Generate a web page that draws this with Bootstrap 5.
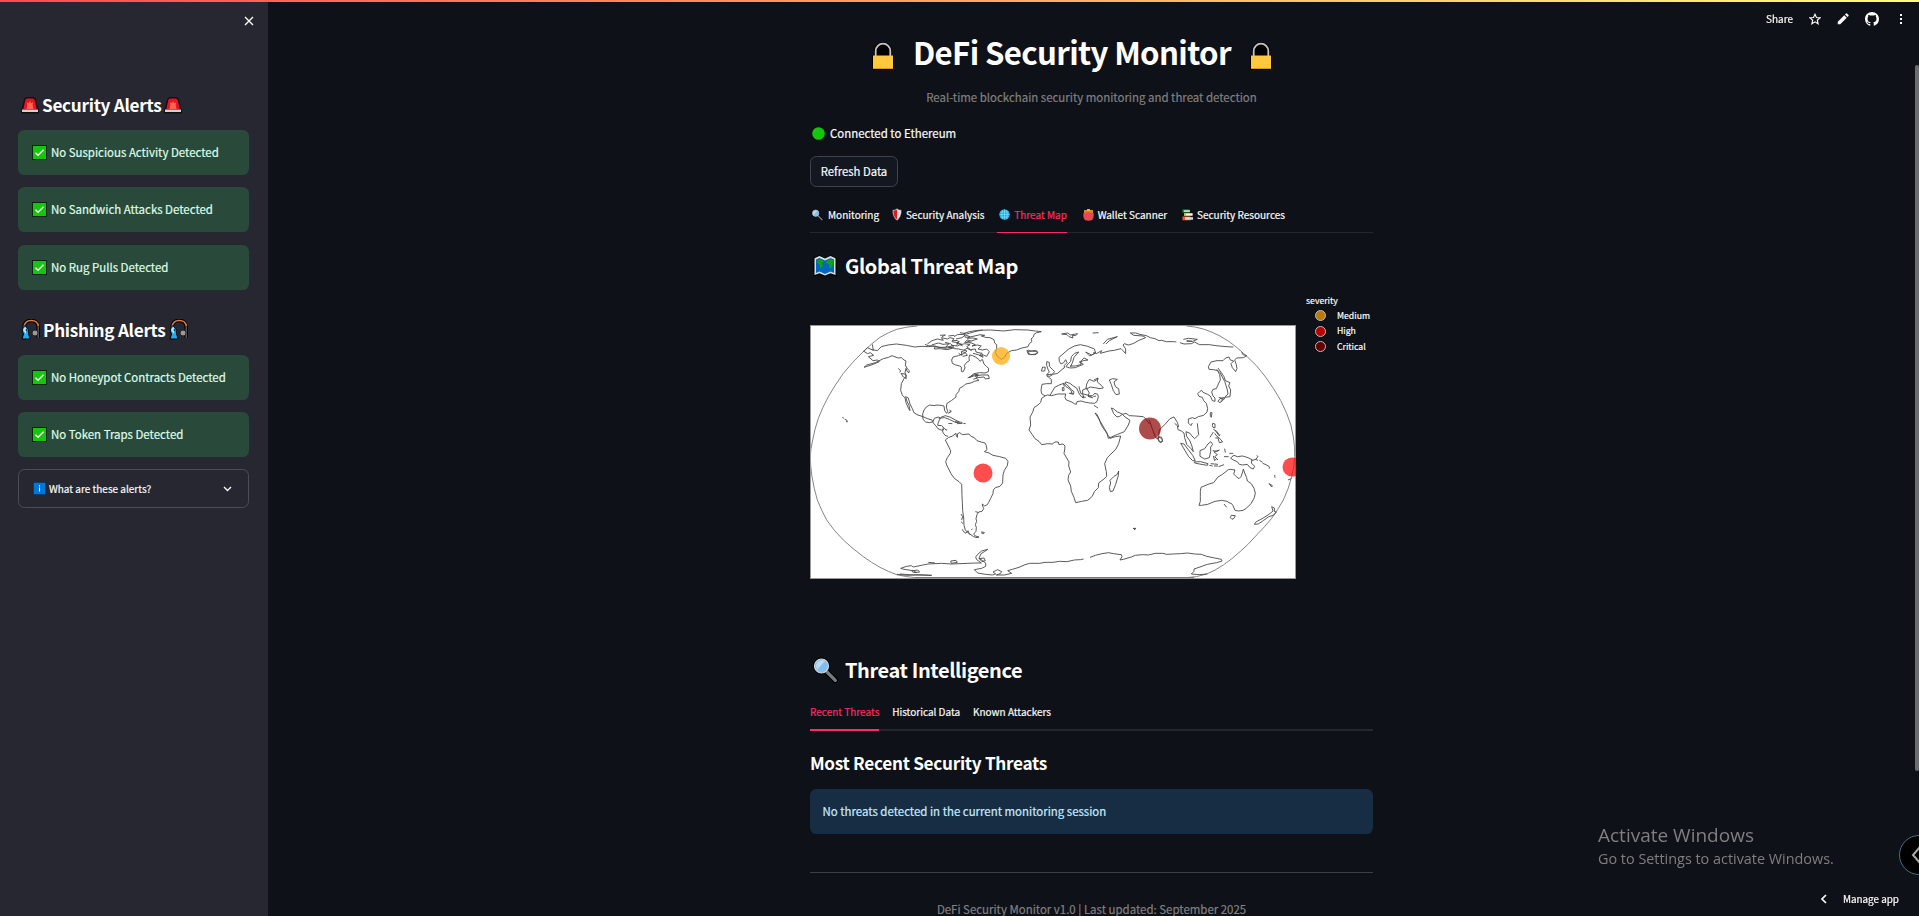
<!DOCTYPE html>
<html lang="en" data-bs-theme="dark">
<head>
<meta charset="utf-8">
<meta name="viewport" content="width=device-width, initial-scale=1">
<title>DeFi Security Monitor</title>
<link href="https://cdn.jsdelivr.net/npm/bootstrap@5.3.0/dist/css/bootstrap.min.css" rel="stylesheet">
<style>
:root{--ink:#fafafa;--accent:#ff2b5e}
body{font-family:"Noto Sans CJK SC","Source Sans Pro",sans-serif;background:#0e1117;color:var(--ink);font-size:11.45px;line-height:20px;height:100vh;overflow:hidden;white-space:nowrap;-webkit-text-stroke:.2px}
.topline{height:2px;background:linear-gradient(90deg,#ff4b4b,#fffd80);z-index:9}
.side{width:268px;background:#262730;padding:0 19px 0 18px}
.side-close{height:130px}
h1,h2,h3,p{margin:0}
h1,h2,h3{-webkit-text-stroke:0}
h1{font-size:31.2px;font-weight:700;line-height:40px;letter-spacing:-.65px}
h2{font-size:20px;font-weight:700;line-height:28px;letter-spacing:-.4px}
h3{font-size:17.2px;font-weight:700;line-height:26px;letter-spacing:-.3px}
.note{height:45px;border-radius:6.4px;border:0;margin:0}
.note-ok{background:#294a3b;color:#dffde9;padding:0 14px;margin-bottom:12.33px}
.note-info{background:#172d43;color:#c7ebff;padding:0 12.5px 1px}
.note-ok span{margin-top:-1px}
.expander{height:39px;border:1px solid #4b4c55;border-radius:6.4px;padding:0 16px 0 14px;font-size:10px}
.column{width:563px}
.column>*{flex-shrink:0}
.dim{color:#808080}
.btn-refresh{width:88px;height:31px;background:#131720;border:1px solid #40434b;border-radius:6.4px;color:var(--ink);font-size:11.3px;line-height:27px;padding:0 0 1px}
.tabbar{border-bottom:1px solid #24272d;gap:12.8px;font-size:10px;height:34px}
.tabbar .nav-link{padding:0 0 2px;color:var(--ink);line-height:31px;height:34px;display:flex;align-items:center;border-bottom:1px solid transparent}
.tabbar .nav-link.active{color:var(--accent);border-bottom-color:var(--accent)}
.thick{border-bottom-width:2px;height:35px}
.thick .nav-link{border-bottom-width:2px;height:35px}
.legend-box{font-size:8.7px;line-height:15.200px;padding:0 0 0 10px;margin-top:-1px}
.dot{width:11px;height:11px;border-radius:50%;border:1.5px solid #bbb}
.rule{height:1px;background:#3b3e43}
.scroll{width:4px;padding-top:65px}
.scroll div{height:706px;background:#6b6c70;border-radius:2px}
.tools{top:10px;right:12px;height:18px;font-size:10px}
.watermark{left:1598px;top:820px;color:#7d7f82;font-family:"Open Sans","Noto Sans",sans-serif;-webkit-text-stroke:0}
.bubble{width:40px;height:40px;left:1899px;top:835px;border-radius:50%;background:#000;border:1px solid #3f7286}
.manage{right:20px;top:889px;font-size:9.9px}
</style>
</head>
<body>
<svg width="0" height="0" class="position-absolute">
<defs>
<symbol id="lock" viewBox="0 0 24 30"><path d="M3 14V10a9 9 0 0 1 18 0v4h2v15H1V14z" fill="#000"/><path d="M4.700 15V10a7.300 7.300 0 0 1 14.600 0v5" fill="#000" stroke="#c4c4c4" stroke-width="1.800"/><path d="M2 14.500h20V27.500q0 .5-.5.5h-19q-.5 0-.5-.5z" fill="#ffc83d"/><path d="M2 27.500h20" stroke="#d99a1c"/></symbol>
<symbol id="siren" viewBox="0 0 18 17"><path d="M1 12 3.500 2.500Q4 .5 6 .5h6q2 0 2.500 2L17 12q1 .6 1 4H0q0-3.400 1-4z" fill="#111" stroke="#111"/><path d="M2.300 12 4.300 3.200Q4.600 1.500 6.300 1.500h5.400q1.700 0 2 1.700L15.700 12z" fill="#e81224"/><path d="M9 4l1.100 2 2.200-.4-.7 2.200.9 4.200h-7l.9-4.200-.7-2.200 2.200.4z" fill="#f4694a"/><path d="M1 12.500h16v2.500H1z" fill="#d2d2d2"/></symbol>
<symbol id="pole" viewBox="0 0 19 21"><path d="M3 8Q4 1.500 10 1.500q7 0 7.300 7V19" fill="none" stroke="#000" stroke-width="3.600"/><path d="M3 8Q4 1.500 10 1.500q7 0 7.300 6" fill="none" stroke="#e5793e" stroke-width="1.500"/><path d="M17.300 8v11" stroke="#555" stroke-width="1.600"/><circle cx="14" cy="14" r="3" fill="#999" stroke="#222"/><path d="M4 6.500q4.500 3.500 3.500 8L9 20H1l1.500-5Q-.5 10 4 6.500z" fill="#27a9ea" stroke="#000"/><path d="M2 11q1-3 3-3v7z" fill="#b8ecff"/><circle cx="5.300" cy="11" r=".8" fill="#000"/></symbol>
<symbol id="check" viewBox="0 0 15 15"><path d="M0 0h15v15H0z" fill="#0b2512"/><path d="M1 1h13v13H1z" fill="#16c60c"/><path d="M3.500 7.800 6 10.300 11.500 4.700" fill="none" stroke="#fff" stroke-width="1.400"/></symbol>
<symbol id="info" viewBox="0 0 13 13"><path d="M0 0h13v13H0z" fill="#10233c"/><path d="M.7.7h11.600v11.600H.7z" fill="#0078d7"/><path d="M6.500 5.500V9.500M6.500 3.300v1.100" stroke="#fff" stroke-width="1.100"/></symbol>
<symbol id="lens" viewBox="0 0 25 26"><path d="M14 15l8.500 8.500" stroke="#000" stroke-width="5.500" stroke-linecap="round"/><circle cx="8.500" cy="9" r="8.500" fill="#000"/><path d="M14 15l8.300 8.300" stroke="#777d82" stroke-width="3.200" stroke-linecap="round"/><circle cx="8.500" cy="9" r="7" fill="#83beec" stroke="#cfd8de" stroke-width="1.200"/><path d="M3 9a6 6 0 0 1 9-5L4 13z" fill="#b9dcf6"/></symbol>
<symbol id="shield" viewBox="0 0 10 13"><path d="M5 .5Q7 2 9.500 2 9.800 9 5 12.500.2 9 .5 2 3 2 5 .5z" fill="#e6e6e6" stroke="#333" stroke-width=".5"/><path d="M5 1.500V11.500Q1.200 8.500 1.300 2.800 3.500 2.600 5 1.500z" fill="#e81224"/></symbol>
<symbol id="globe" viewBox="0 0 11 11"><circle cx="5.500" cy="5.500" r="5.200" fill="#19aee8"/><path d="M.5 5.500h10M5.500.5v10M1.500 3h8M1.500 8h8M3.500 1Q1.800 5.500 3.500 10M7.500 1q1.700 4.500 0 9" fill="none" stroke="#8fe2ff" stroke-width=".6"/></symbol>
<symbol id="purse" viewBox="0 0 11 12"><path d="M1 1h9v4H1z" fill="#d98a16"/><path d="M4 0h3v2H4z" fill="#f0b030"/><path d="M.5 4q5-1.500 10 0 .8 4.500-1.300 7-3.700 1.500-7.400 0Q-.3 8.500.5 4z" fill="#e74856"/></symbol>
<symbol id="books" viewBox="0 0 11 12"><path d="M.5.500h7v3h-7z" fill="#16a329"/><path d="M2 1.300h6v1.500H2z" fill="#dfe9df"/><path d="M2 4h8.500v3H2z" fill="#f0a52a"/><path d="M4 4.700h6.500v1.500H4z" fill="#fff"/><path d="M.5 7.500h8v3.800h-8z" fill="#e5602b"/><path d="M3 8.200h8v2.500H3z" fill="#d9dde2"/></symbol>
<symbol id="wmap" viewBox="0 0 26 24"><path d="M1 4 7 1l6 3 6-3 6 3-.5 19-6-2-5.500 2-6-2-6 2z" fill="#050607"/><path d="M2.500 4.300 7.500 2l5.500 2.500L18.500 2l5 2.300V21l-5-1.800L13 21.500l-5.500-2.300-5 1.800z" fill="#d8dde2"/><path d="M4 5.500 7.500 4l5.500 2.500L18.500 4 22 5.500V19l-3.500-1.400L13 20l-5.500-2.400L4 19z" fill="#0067c0"/><path d="M5 6.500l4-1 3 2-2 2 1 2-2.500 3-1-4-2.500-2zM14 7.500l4-2.500 3.500 1.500-.5 4-2 4-2-1 .5-3-3-1z" fill="#13a10e"/></symbol>
</defs></svg>

<div class="topline fixed-top"></div>
<div class="d-flex h-100">
  <aside class="side flex-shrink-0">
    <div class="side-close position-relative d-flex flex-column justify-content-between">
      <svg class="position-absolute" style="left:226px;top:16px" width="10" height="10"><path d="M1 1l8 8M9 1 1 9" stroke="#fafafa" stroke-width="1.400"/></svg>
      <span></span>
      <h3 class="d-flex align-items-center mb-2 pb-1" style="padding-left:3px"><svg width="18" height="17"><use href="#siren"/></svg><span style="margin:0 3px">Security Alerts</span><svg width="18" height="17"><use href="#siren"/></svg></h3>
    </div>
    <div class="note note-ok alert d-flex align-items-center"><svg width="15" height="15"><use href="#check"/></svg><span class="ms-1">No Suspicious Activity Detected</span></div>
    <div class="note note-ok alert d-flex align-items-center"><svg width="15" height="15"><use href="#check"/></svg><span class="ms-1">No Sandwich Attacks Detected</span></div>
    <div class="note note-ok alert d-flex align-items-center"><svg width="15" height="15"><use href="#check"/></svg><span class="ms-1">No Rug Pulls Detected</span></div>
    <h3 class="d-flex align-items-center" style="padding-left:3px;margin:27px 0 12px"><svg width="19" height="21"><use href="#pole"/></svg><span style="margin:0 3px">Phishing Alerts</span><svg width="19" height="21"><use href="#pole"/></svg></h3>
    <div class="note note-ok alert d-flex align-items-center"><svg width="15" height="15"><use href="#check"/></svg><span class="ms-1">No Honeypot Contracts Detected</span></div>
    <div class="note note-ok alert d-flex align-items-center"><svg width="15" height="15"><use href="#check"/></svg><span class="ms-1">No Token Traps Detected</span></div>
    <div class="expander d-flex align-items-center"><svg width="13" height="13"><use href="#info"/></svg><span class="me-auto" style="margin-left:3px">What are these alerts?</span><svg width="9" height="6"><path d="M1 1l3.500 3.500L8 1" fill="none" stroke="#fafafa" stroke-width="1.400"/></svg></div>
  </aside>

  <main class="flex-grow-1 d-flex justify-content-center">
    <div class="column d-flex flex-column flex-shrink-0">
      <h1 class="d-flex align-items-center" style="margin:32px 0 0 61px"><svg width="24" height="30" style="margin-top:8px"><use href="#lock"/></svg><span style="margin:0 18px">DeFi Security Monitor</span><svg width="24" height="30" style="margin-top:8px"><use href="#lock"/></svg></h1>
      <p class="dim text-center" style="margin-top:15px">Real-time blockchain security monitoring and threat detection</p>
      <p class="d-flex align-items-center" style="margin-top:16px;padding-left:2px"><svg width="13" height="13"><circle cx="6.500" cy="6.500" r="6.300" fill="#16c60c"/></svg><span style="margin-left:5px">Connected to Ethereum</span></p>
      <button type="button" class="btn btn-refresh" style="margin-top:13px">Refresh Data</button>
      <nav class="nav flex-nowrap tabbar" style="margin-top:12px">
        <a class="nav-link"><svg width="13" height="12" style="margin:0 4px 0 1px"><use href="#lens"/></svg>Monitoring</a>
        <a class="nav-link"><svg width="10" height="13" class="me-1"><use href="#shield"/></svg>Security Analysis</a>
        <a class="nav-link active"><svg width="11" height="11" style="margin:0 4px 0 2px"><use href="#globe"/></svg>Threat Map</a>
        <a class="nav-link"><svg width="11" height="12" style="margin:0 4px 0 3px"><use href="#purse"/></svg>Wallet Scanner</a>
        <a class="nav-link"><svg width="11" height="12" style="margin:0 4px 0 2px"><use href="#books"/></svg>Security Resources</a>
      </nav>
      <h2 class="d-flex align-items-center" style="margin-top:19px;padding-left:2px"><svg width="26" height="24"><use href="#wmap"/></svg><span style="margin-left:7px">Global Threat Map</span></h2>
      <div class="d-flex" style="margin-top:14px">
        <svg class="flex-shrink-0" style="margin-top:31px" width="486" height="254" viewBox="0 0 486 254">
          <rect width="486" height="254" fill="#fff"/>
          <g fill="none" stroke="#484848" stroke-width="2.700" stroke-linejoin="round">
          <!-- Americas, Greenland, west Antarctica -->
          <g transform="translate(-10 -85) scale(.33333)">
            <path stroke="#777" d="M352 258Q320 260 290 268 265 277 240 292 213 312 190 335 157 366 130 400 105 435 85 470 67 503 55 535 44 567 38 600 31 630 31 650 31 680 36 710 42 747 52 780 64 811 80 840 102 873 130 900 159 927 190 950 215 968 240 982 265 995 290 1004 315 1010 345 1013"/>
            <path d="M190 335l12-12 18 8-3-18M190 333l13 8 8-3 10 8-16 4 14 12 14-2 5 5-18 8-28 9 8-7 26-7 24-12 16-4 10-5 18 7 10-1 8 7 6 3-2 12 5 10 7 7-1 6-5-3-4-10-3 13 4 10-7 8-8 15-2 20 5 15 8 7 3 15 8 18 4 6-3-16-6-12-4-14 8 4 5 18 7 14 5 12 9 6 18 6 13 6 14 4 4 9 8 9 6 8 12 5 8-6 4 6 4-3M217 329l15 3 12-12 20-5 25-3 30 4 25 5 22-2 20 1 18-2 10 3 22 4 16-3 12 4 12 1 9 2 16 4-8 7-18 7-16 4-4 9 2 10 10 5 12 3 5 3 0 13 5 2 6-12-2-8 7-9 8-5-1-10 2-7 9 2 10 5 8 6 4 6 7-6 5 14 8 8 6 5-1 10-10 4-16-1-17 3-15 12 14-5 12-2-4 9 8 6-14 3-10 5-16 3-6 6-12 7-3 10-8 9 0 7-14 11-13 8-2 11 4 14-3 5-6-8-2-14-9-2-12-1-9 2-13-2-10 6-7 9-4 12 1 16 8 8 12 2 10-3 4-10 12-4 6 3-6 13-2 9 12 1 5 4-2 15 7 10 9 3"/>
            <path d="M295 385l7 8-3 4M303 400l14 3 2 13-9-5zM503 414l20-10 12-1-10 6 18-4 22 0 3 10-12 2-4-6-20 2-12 5M448 510l6 4-6 3M444 520l8-4M422 532l14-5 16 5 14 8 12 6-10 2-20-10-14-5-18 2M445 550l12 1M465 545l20 2 2 3-16 1M490 550l7 1M127 532l5 3M134 538l6 2 2 6-4-2"/>
            <path d="M436 600l10-8 10-3 12-9 1 8 3 4 1-11 6-3 8 6 20-2 6 7 10 4 8 9 12 4 12 3 4 8 2 12-8 6 14 4 12 7 20 4 18 5 7 9-2 13-9 14-4 14-1 24-8 10-14 4-6 7-1 11-7 14-6 12-4 7-8 4-7-6 1 6 3 8-5 8-10 2-5 8-3 12 2 8-4 10 3 8-1 12-7 8 5 6 11 3-6 2-10-3-16-11-9-9-4-14-1-22-3-22-1-25-1-20-1-34-8-8-14-10-10-14-13-26-3-10 5-12 9-13 1-8-4-8zM543 876l10 1-2 4-7-2"/>
            <path d="M487 868l3 6 8 6 6-8 5 12M483 822l5 8-3 10M484 845l4 6M514 870l4-4M526 815l8 2"/>
            <path d="M496 292l-4-12 16-5 24-4 40-1 38 3 34-4 38 1 24 3 18 2-14 3-8 5-2 8-7 6 3 7-8 7-4 9-18 4-16 6-16 2-14 8-6 12-10 6-12-9-6-11 4-12 0-12-6-5-2-10-12-6-14-1-12-4 10-2-14-2-12 3-18 4zM680 333l6-3 3 5 8-3 12 0 5 5-6 5-14 2-10-2 2-4z"/>
            <path d="M382 312l14-10 16-5 18 4-6-8 18 4 8-4 12 3-6 7 12-2 10 4-8 5 14 2-12 6-16-2 6 6-16-2-14 2-18 0-16-4-14-1-9-4M395 315l20-6 14 4 22-2 6 5-12 7 12 2-16 4-20-3-18 1 2-6M420 286l16-1-10 5M445 288l18-2M462 290l10-6 20-1M468 297l18-4 10-8 14 5-8 5 18-1 12 3-18 6-12-3-8 7 20 2 12 5-10 4 16-3 12 3-10 9 14 3 12-3 8 8-8 14-10-4-12 2 6-7-16-4-2-9-14 2-12-9 10-6-16-3-14 4M480 278l20 4 28-8 20-4M478 312l10 6M500 303l14 4M476 340l10 6-2-12 12 4 6 8-14 3M545 338l4 14-14-8-16-4M515 332l-14-7-10 6M437 322l10-12-12-3M455 305l20 3-5 8"/>
            <path d="M290 1003l30 3 35-2 40 2-55-1-40-3M350 998l-10-6-28-4-10-3 18-6 14-2 6 4 24-5 20-4 40-2 30 2 50-2 22-1 18 0-8-6-6-4-3-8 6-8 12-10 18-5-10 7-10 6-6 14 10 6 10 8 0 10-12 6-22 4 10 10 24 4 20 2 10-3-8-6 14-7 12 6-4 6-12 4 24 0 22-5-12-8 14-4 20-6 18-8 14-4 30 0 16-3 24 0 20-3 22 1 22-5 18-1 10-2M452 963l16-2 4 6-18 3zM385 967l20 2M538 956l14-2 4 8-10 3zM335 993l18-3 6 6-18 2z"/>
          </g>
          <!-- Europe, Africa, Middle East -->
          <g transform="translate(210 -5) scale(.33333)">
            <path d="M75 228l8-3 12 2 18-5 24 0-2 10 4 8 14 5 10 6 6 2 2-8 12-2 10 3 16 3 14 1 8-5 4-14-2-8-8-3-8 7-8 0-14-4-12-2-4-12-2-10M75 228l-10 7-3 12-8 8-12 8-4 14-8 14 1 12 1 12-5 15 10 14 8 12 12 8 8 10 18-3 14 1 8-6 10 0 2 8 12-2 6 6-1 12-2 10 8 14 7 12-1 12 6 18-6 10-2 14 8 18 2 16 8 18 5 16 18-4 18-3 14-12 6-14 12-12 1-14 16-12 8-8-1-14-5-24 8-18 14-14 12-12 8-16 6-23-16 2-16 5-5-8-8-12-12-18-8-20-12-18 6 4 10 22 12 20 8 14 4 16 28-12 20-8 12-20 5-14-15-10-8-8-8 6-8 2-10-10-7-17 6 2 12 10 8 3 8 4 10-3 10 7 18 1 24 2 10 10 8 12M388 300l8 24 10 26 4 6 6-4 2-22 18-18 14-16 12-5 10 16 4 14M415 350l10 2 3 12-6 4-6-8zM296 453l-1 14-8 26-8 20-8 2-3-12 4-14-2-8 12-12 10-6zM340 625l6 1-2 3z"/>
            <path d="M75 228l-10-7-2-10 3-18 14-2 14 0 0-13-8-6-6-5 9 2 10-6 14-3 16-14 4-2 0-8 8-8-4-9-6 9-8 4-5-8-1-12 12-10 16-14 18-10 18-4 22 5 20 8 4 12-12 6-12-6-6-3 8 8 4 4 14-7-2-4 8 4 16-9-4 8 26-7 16-2 20-5 6 6 8 9 0-14-8-12 4-4 12 4 14-4 18-10 20-8-8-5-28-2-10-7 16 0 12 4 20 4 12 6 14 3 12 6 8-1 14 4 24 0 6 1M152 140l6-14 4-14 14-16-12 4-10 10-2 14-8 8-6 8 12 4 16-1 14-6 10-4-12-7 12-4 14-2-12-6-8 8-2 12-16 4-16 0zM80 125l8 2 0 12 10 10 6 6-8 8-16 1 8-8-4-8-4-12zM64 153l4-12 8 1-2 11zM22 98l6-6 10 2 12 0 2 6-8 4-14-1z"/>
            <path d="M90 226l6-10 8-14 16-8 12-4 6 10 10 6 8 10-4 5 8 2 2-8-8-6-12-14-8-6 4-3 12 4 10 8 10 6 8 18 8 10 6 2-4-12 0-12 12-5 8 14-4 8 14 6-14-4M130 190l3 10M127 203l5 0 0 9-5 0zM147 220l12 0M187 230l10 2M220 230l8-2M198 206l2-14 8-14 14 6 8-4 4-6-2 12 12 10 6 8-10 2-16-3-12-2-14 6zM222 180l12-6M268 180l10-4 14 2-10 8 4 14 10 6 2 16-10 2-8-12-6-18zM250 72l12-14 30-8-24 12-10 10M125 42l18-3 8 6 22-4-6 6-10-1 2 8-12-4-6-6zM218 39l18-1M222 256l12 8"/>
          </g>
          <!-- Asia, Oceania, east Antarctica -->
          <g transform="translate(280 -45) scale(.33333)">
            <path stroke="#777" d="M290 138Q317 140 340 147 367 156 390 168 417 183 440 202 472 229 500 258 529 291 550 325 574 360 590 400 605 435 610 470 615 500 614 530 613 560 605 590 596 627 580 660 563 690 545 715 524 741 500 765 476 793 450 815 425 838 400 855 375 872 350 882 320 892 290 893"/>
            <path d="M270 188l12 4 22-1 10-5 14 8 30 0 20 3 30 3 22 1M280 178l16-3 26 3-14 6-18-2M290 184l16 0M455 217l4 7 11 3-10 6-20 1-6 6 5 14 2 12-4 9-10-12-4-12 8-8-10-3-4-9-10 3-8 8-18 0-18 4-8 14 2 8 14 1 12 3 6 12 2 16-6 12-6 14-10 2-4 8 4 12 6 6 0 10-8-2-6-14-8-5-14-6-4-6-6 4-6 6 4 8 10 3 4 10 8 8 4 16-2 10-10 10-16 4-10 6-8-3-12 4 0 12 8 8 4-8M322 430l2 18 2 16-12 12-8-8-6-8-12-5 2 14 10 14 6 16 4 16-8-10-12-12-6-20-2-14-8-6-10-4-2-12-8-7"/>
            <path d="M384 264l10 14 8 12 4 12 14 6-4 10 6 12-2 20-14 2-6 8-10 8-6-4 6-8 14-4 10-10-2-12-4-14-4-12-14-26-10-10M386 352l14 4-8 6M361 398l5 0-2 14-3-4zM368 430l7 2 0 12-6-2-2-6zM370 448l10 6 8 10M374 460l4 6 12 10 8 10-10 2-4-14-8 0M360 472l10-16M376 452l12 16 2-4M272 490l10 2 12 16 14 18 8 16-8 0-12-12-12-20zM312 546l20-1 22 6-2 5-24-4-14-3zM358 556l10 2M372 558l12 0M386 560l16-6M362 551l22 2M330 512l14-6 10-14 8-7 6 8-6 8 0 14-4 18-14 4-14-8zM368 512l14 2 6-4-16 6 10 8-8 6 10 10-4-4-6 6-4-14M404 506l2 12M402 530l14 0M418 520l12 0M426 530l6-4 10 4 16-2 16 5 12 6-2 10 10 10-4 8-10-4-8-10-14 2-10-2-6-8-10-4-10-6zM484 542l14-4 6-9-4-2M496 538l8 3M508 541l10 6M518 550l10 4M528 554l10 6 0 6M554 585l1 8M537 611l10 6-2 4zM594 600l10-4"/>
            <path d="M333 622l24-10 14-4 12-16 14-9 8-6 10-8 6-1 14 2-4 12 8 8 8 6 6-6 5-14 2-9 4 12 6 14 2 10 12 8 8 14 4 14-3 14-10 18-14 14-10 6-14 2-10-2-6-14-4-6-8-3-6-4-16-3-20 3-22 9-18 3-8 0 4-12 0-14 0-16zM424 706l12 1-4 8-6 3-5-5zM545 680l8 4 0 10 6 2-8 9-16 6-14 10-16 11-12 1 6-8 16-8 22-14 12-10zM402 672l8 10M202 474l8-2 8 8-4 6-6 0zM131 745l6 0-3 4z"/>
            <path d="M0 832l16-6 20-5 20-3 14 3 24 3 2 6-6 10 10-2 24-7 12-5 22-2 18 1 20-5 22 0 12 3 20-1 22-1 20-2 22 3 20 1 16 6 24 5 20 4 2 5-16 5-28 5-22 8-18 6 0 7-8 8 24 2 24-2"/>
          </g>
          </g>
          <path d="M107 .5H385M105 252.500H384" stroke="#777"/>
          <rect x=".5" y=".5" width="485" height="253" fill="none" stroke="#999"/>
          <g fill-opacity=".7"><circle cx="191" cy="31" r="9" fill="#ffa500"/><circle cx="173" cy="148" r="9.500" fill="#f00"/><circle cx="340" cy="103.500" r="11" fill="#8b0000"/><circle cx="482" cy="142" r="9.500" fill="#f00"/></g>
        </svg>
        <div class="legend-box d-flex flex-column">
          <span>severity</span>
          <div class="d-flex align-items-center"><i class="dot" style="background:#b87a0b;margin:0 11px 0 9px"></i>Medium</div>
          <div class="d-flex align-items-center"><i class="dot" style="background:#b80000;margin:0 11px 0 9px"></i>High</div>
          <div class="d-flex align-items-center"><i class="dot" style="background:#640000;margin:0 11px 0 9px"></i>Critical</div>
        </div>
      </div>
      <h2 class="d-flex align-items-center" style="margin-top:77px;padding-left:3px"><svg width="25" height="26"><use href="#lens"/></svg><span style="margin-left:7px">Threat Intelligence</span></h2>
      <nav class="nav flex-nowrap tabbar thick" style="margin-top:12px">
        <a class="nav-link active">Recent Threats</a><a class="nav-link">Historical Data</a><a class="nav-link">Known Attackers</a>
      </nav>
      <h3 style="margin-top:19px">Most Recent Security Threats</h3>
      <div class="note note-info alert d-flex align-items-center" style="margin-top:13px">No threats detected in the current monitoring session</div>
      <div class="rule" style="margin-top:38px"></div>
      <p class="dim text-center" style="margin-top:26px">DeFi Security Monitor v1.0 | Last updated: September 2025</p>
    </div>
  </main>
  <div class="scroll flex-shrink-0"><div></div></div>
</div>

<div class="tools position-fixed d-flex align-items-center">
  <span style="margin-right:16px">Share</span>
  <svg width="12" height="12" viewBox="0 0 24 24" style="margin-right:16px"><path d="M12 2.500l2.900 6.500 7.100.7-5.400 4.700 1.600 7L12 17.700l-6.200 3.700 1.600-7L2 9.700 9.100 9z" fill="none" stroke="#fafafa" stroke-width="2.300"/></svg>
  <svg width="12" height="12" viewBox="0 0 24 24" style="margin-right:16px"><path d="M1.500 22.500v-5L14.500 4.500l5 5-13 13zM16 3l2-2q1-.8 2 0l3 3q.8 1 0 2l-2 2z" fill="#fafafa"/></svg>
  <svg width="14" height="14" viewBox="0 0 16 16" style="margin-right:20px"><path fill="#fafafa" d="M8 0C3.580 0 0 3.580 0 8c0 3.540 2.290 6.530 5.470 7.590.4.070.55-.17.55-.38 0-.19-.01-.82-.01-1.490-2.010.37-2.530-.49-2.690-.94-.09-.23-.48-.94-.82-1.130-.28-.15-.68-.52-.01-.53.63-.01 1.080.58 1.230.82.72 1.210 1.870.87 2.330.66.070-.52.280-.87.510-1.070-1.780-.2-3.640-.89-3.640-3.950 0-.87.310-1.590.820-2.150-.080-.2-.360-1.020.080-2.120 0 0 .67-.21 2.200.82a7.600 7.600 0 0 1 4 0c1.530-1.040 2.200-.82 2.200-.82.440 1.100.160 1.920.080 2.120.510.56.820 1.270.820 2.150 0 3.070-1.870 3.750-3.650 3.950.290.25.540.73.540 1.480 0 1.070-.01 1.930-.01 2.200 0 .21.150.46.550.38A8 8 0 0 0 16 8c0-4.420-3.580-8-8-8z"/></svg>
  <svg width="4" height="12" style="margin-right:4px"><path d="M1 1h2v2H1zM1 5h2v2H1zM1 9h2v2H1z" fill="#fafafa"/></svg>
</div>
<div class="watermark position-fixed"><div class="d-inline-block" style="font-size:19px;line-height:30px">Activate Windows</div><br><div class="d-inline-block" style="font-size:14.4px;line-height:18px">Go to Settings to activate Windows.</div></div>
<div class="bubble position-fixed"><svg width="20" height="38"><path d="M20 11l-7 8 7 8" fill="none" stroke="#aaa" stroke-width="2"/></svg></div>
<div class="manage position-fixed d-flex align-items-center"><svg width="6" height="10" style="margin-right:16px"><path d="M5 1 1 5l4 4" fill="none" stroke="#fafafa" stroke-width="1.700"/></svg>Manage app</div>
<script src="https://cdn.jsdelivr.net/npm/bootstrap@5.3.0/dist/js/bootstrap.bundle.min.js"></script>
</body>
</html>
